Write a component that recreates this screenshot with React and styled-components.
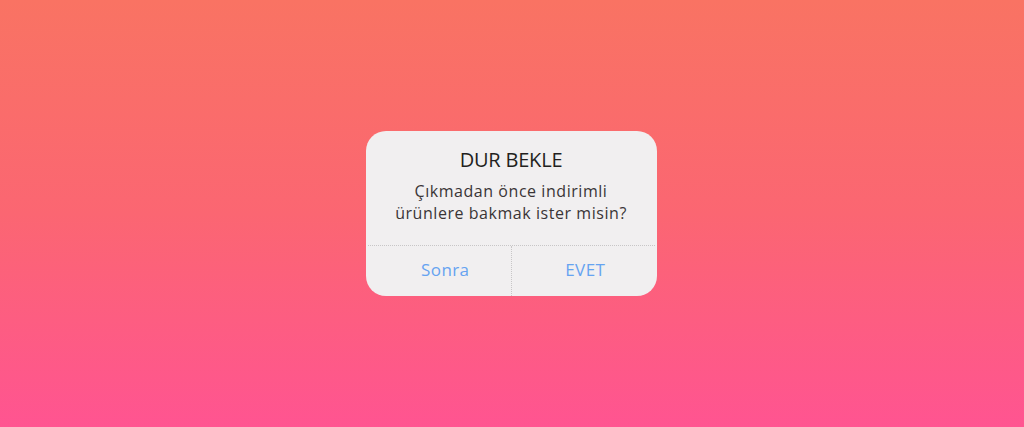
import React from "react";
import styled, { createGlobalStyle } from "styled-components";

const Global = createGlobalStyle`
  html, body { margin: 0; padding: 0; }
  body { width: 1024px; height: 427px; overflow: hidden; }
  #root { height: 100%; }
`;

const Stage = styled.div`
  width: 1024px;
  height: 427px;
  background: linear-gradient(180deg, #f97363 0%, #fb6672 50%, #ff5491 100%);
  display: flex;
  align-items: center;
  justify-content: center;
`;

const Dialog = styled.div`
  width: 291px;
  height: 165px;
  margin-left: -2px;
  background: #f1eff0;
  border-radius: 20px;
  display: flex;
  flex-direction: column;
  overflow: hidden;
`;

const Body = styled.div`
  flex: 1;
  display: flex;
  flex-direction: column;
  align-items: center;
  padding-top: 15px;
`;

const Title = styled.div`
  font-family: "Open Sans", sans-serif;
  font-size: 20px;
  letter-spacing: -0.2px;
  color: #231f20;
  line-height: 28px;
`;

const Message = styled.div`
  margin-top: 6px;
  font-family: "Open Sans", sans-serif;
  font-size: 16px;
  letter-spacing: 0.55px;
  color: #3a3536;
  line-height: 22px;
  text-align: center;
`;

const Actions = styled.div`
  height: 50px;
  display: grid;
  grid-template-columns: 1fr 1fr;
  border-top: 1px dotted #c8c6c7;
  margin: 0 2px;
`;

const ActionButton = styled.button`
  border: none;
  background: transparent;
  font-family: "Open Sans", sans-serif;
  font-size: 17px;
  letter-spacing: 0.4px;
  color: #66a3f1;
  padding: 0 0 4px ${(p) => p.$shift || 0}px;
  cursor: pointer;
  border-left: ${(p) => (p.$divider ? "1px dotted #c8c6c7" : "none")};
`;

export default function App() {
  return (
    <>
      <Global />
      <Stage>
        <Dialog>
          <Body>
            <Title>DUR BEKLE</Title>
            <Message>
              Çıkmadan önce indirimli
              <br />
              ürünlere bakmak ister misin?
            </Message>
          </Body>
          <Actions>
            <ActionButton $shift={12}>Sonra</ActionButton>
            <ActionButton $divider $shift={4}>EVET</ActionButton>
          </Actions>
        </Dialog>
      </Stage>
    </>
  );
}
